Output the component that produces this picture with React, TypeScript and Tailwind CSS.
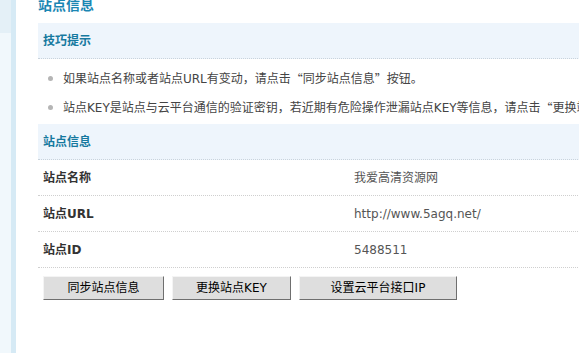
const font = { fontFamily: '"DejaVu Sans", "Noto Sans CJK SC", sans-serif' };
const cjk = { fontFamily: '"Noto Sans CJK SC", sans-serif' };

const rows = [
  { label: "站点名称", value: "我爱高清资源网" },
  { label: "站点URL", value: "http://www.5agq.net/" },
  { label: "站点ID", value: "5488511" },
];

const tips = [
  "如果站点名称或者站点URL有变动，请点击“同步站点信息”按钮。",
  "站点KEY是站点与云平台通信的验证密钥，若近期有危险操作泄漏站点KEY等信息，请点击“更换站点KEY”按钮。",
];

// quotes need the full-width CJK glyphs
function Tip({ text }: { text: string }) {
  return (
    <>
      {text.split(/([“”])/).map((p, i) =>
        p === "“" || p === "”" ? (
          <span key={i} className="inline-block w-[12px] text-center" style={cjk}>
            {p}
          </span>
        ) : (
          <span key={i}>{p}</span>
        )
      )}
    </>
  );
}

function SectionHead({ title }: { title: string }) {
  return (
    <div className="h-[36px] bg-[#eef5fc] border-b border-dotted border-[#c9d3dc] flex items-center pl-[5px]">
      <span className="text-[12px] font-bold text-[#16799f]">{title}</span>
    </div>
  );
}

function Btn({ children, w }: { children: React.ReactNode; w: string }) {
  return (
    <button
      className={`${w} h-[24px] bg-[#dedede] border border-t-[#f4f4f4] border-l-[#f4f4f4] border-r-[#6f6f6f] border-b-[#6f6f6f] text-[12px] text-black`}
    >
      {children}
    </button>
  );
}

export default function App() {
  return (
    <div className="w-[579px] h-[353px] overflow-hidden bg-white flex text-[12px]" style={font}>
      <div className="w-[11px] flex flex-col">
        <div className="h-[33px] bg-[#e4f0f7]" />
        <div className="flex-1 bg-[#f1f8fc]" />
      </div>
      <div className="w-[5px] bg-[#d6eaf5]" />
      <div className="flex-1 min-w-0 pl-[22px]">
        <div className="h-[23px] overflow-hidden">
          <div className="-mt-[4px] text-[14px] leading-[18px] font-bold text-[#1a86b3] whitespace-nowrap">站点信息</div>
        </div>
        <div className="w-[700px]">
          <SectionHead title="技巧提示" />
          <ul className="h-[65px] pt-[5px]">
            {tips.map((t) => (
              <li key={t} className="h-[29px] flex items-center whitespace-nowrap text-[#444]">
                <span className="ml-[10px] mr-[10px] w-[5px] h-[5px] rounded-full bg-[#b5b5b5]" />
                <Tip text={t} />
              </li>
            ))}
          </ul>
          <SectionHead title="站点信息" />
          {rows.map((r) => (
            <div key={r.label} className="h-[36px] flex items-center border-b border-dotted border-[#cfcfcf]">
              <span className="w-[316px] pl-[5px] font-bold text-[#333]">{r.label}</span>
              <span className="text-[#555]">{r.value}</span>
            </div>
          ))}
          <div className="flex gap-[8px] pl-[5px] pt-[8px]">
            <Btn w="w-[121px]">同步站点信息</Btn>
            <Btn w="w-[119px]">更换站点KEY</Btn>
            <Btn w="w-[158px]">设置云平台接口IP</Btn>
          </div>
        </div>
      </div>
    </div>
  );
}
